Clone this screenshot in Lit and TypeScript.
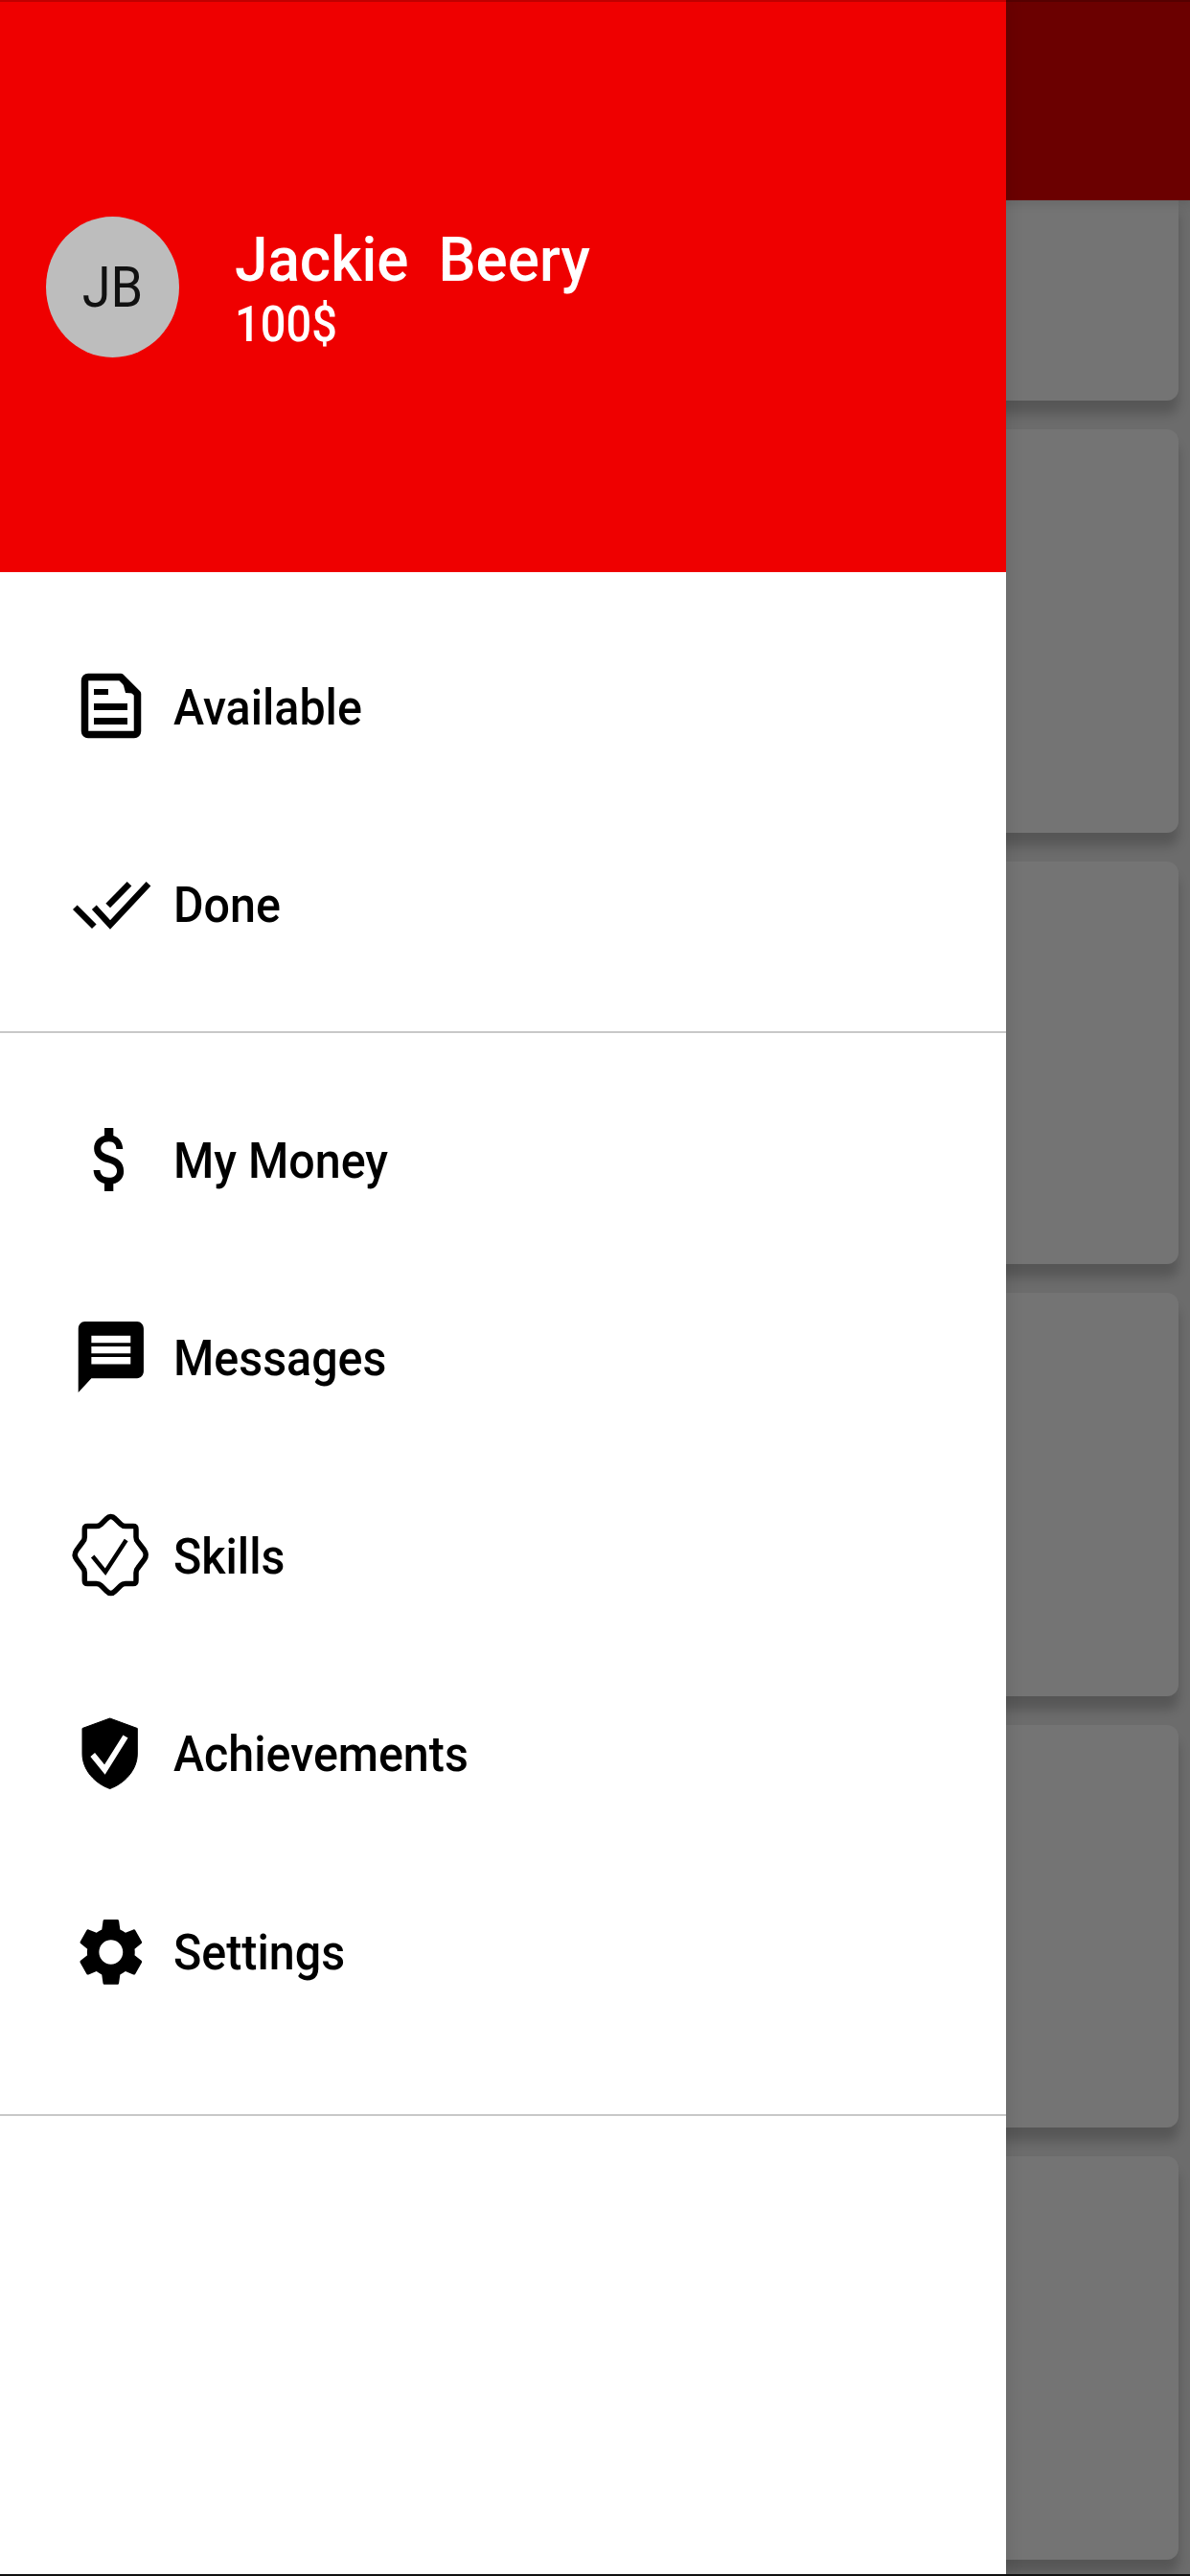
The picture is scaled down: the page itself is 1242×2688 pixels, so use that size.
import { LitElement, css, html, svg } from 'lit';
import { customElement } from 'lit/decorators.js';

// icons are drawn in a 90x100 box centred on the row
const icons = {
  available: svg`
    <path d="M22 19.5H56L73.5 37V76a3.5 3.5 0 0 1-3.5 3.5H22a3.5 3.5 0 0 1-3.5-3.5V23a3.5 3.5 0 0 1 3.5-3.5z" fill="none" stroke="#000" stroke-width="7.5" stroke-linejoin="round"/>
    <path d="M56 17L77 37L61 36z" fill="#000"/>
    <rect x="28" y="32" width="15" height="6"/><rect x="28" y="47" width="35" height="7"/><rect x="28" y="62" width="35" height="7"/>`,
  done: svg`
    <g fill="none" stroke="#000" stroke-width="6.5">
      <path d="M8.3 52.7L28.3 72.7"/>
      <path d="M28.3 52.7L45 71L85 28.3"/>
      <path d="M42.7 51L65 28.3"/>
    </g>`,
  money: svg`<g transform="translate(8 6) scale(3.1 3.67)"><path d="M11.8 10.9c-2.27-.59-3-1.2-3-2.15 0-1.09 1.01-1.85 2.7-1.85 1.78 0 2.44.85 2.5 2.1h2.21c-.07-1.72-1.12-3.3-3.21-3.81V3h-3v2.16c-1.94.42-3.5 1.68-3.5 3.61 0 2.31 1.91 3.46 4.7 4.13 2.5.6 3 1.48 3 2.41 0 .69-.49 1.79-2.7 1.79-2.06 0-2.87-.92-2.98-2.1h-2.2c.12 2.19 1.76 3.42 3.68 3.83V21h3v-2.15c1.95-.37 3.5-1.5 3.5-3.55 0-2.84-2.43-3.81-4.7-4.4z"/></g>`,
  messages: svg`<g transform="translate(4.9 4.6) scale(3.41 3.7)"><path d="M20 2H4c-1.1 0-1.99.9-1.99 2L2 22l4-4h14c1.1 0 2-.9 2-2V4c0-1.1-.9-2-2-2zm-2 12H6v-2h12v2zm0-3H6V9h12v2zm0-3H6V6h12v2z"/></g>`,
  skills: svg`
    <path d="M41 12Q45.7 7 50.4 12L56 17.5Q58 19.5 61 19.5H69Q72 19.5 72 22.5V31Q72 34 74 36L80.5 44.5Q84 49.4 80.5 54.3L74 63Q72 65 72 68V76.4Q72 79.4 69 79.4H61Q58 79.4 56 81.5L50.4 87Q45.7 92 41 87L35.5 81.5Q33.5 79.4 30.5 79.4H21.3Q18.3 79.4 18.3 76.4V68Q18.3 65 16.3 63L10 54.3Q6.5 49.4 10 44.5L16.3 36Q18.3 34 18.3 31V22.5Q18.3 19.5 21.3 19.5H30.5Q33.5 19.5 35.5 17.5z" fill="none" stroke="#000" stroke-width="5.5" stroke-linejoin="round"/>
    <path d="M26.7 51L40 67.3L61.7 33.9" fill="none" stroke="#000" stroke-width="4.5"/>`,
  achievements: svg`
    <path d="M44.7 13L73.3 23.5V50C73.3 67 60 81 44.7 86.5C29 81 16 67 16 50V23.5z" stroke="#000" stroke-width="1" stroke-linejoin="round"/>
    <path d="M26.7 51L39.3 66.5L61 32" fill="none" stroke="#fff" stroke-width="6"/>`,
  settings: svg`<g transform="translate(4.3 8.6) scale(3.46 3.53)"><path d="M19.14 12.94c.04-.3.06-.61.06-.94 0-.32-.02-.64-.07-.94l2.03-1.58c.18-.14.23-.41.12-.61l-1.92-3.32c-.12-.22-.37-.29-.59-.22l-2.39.96c-.5-.38-1.03-.7-1.62-.94l-.36-2.54c-.04-.24-.24-.41-.48-.41h-3.84c-.24 0-.43.17-.47.41l-.36 2.54c-.59.24-1.13.57-1.62.94l-2.39-.96c-.22-.08-.47 0-.59.22L2.74 8.87c-.12.21-.08.47.12.61l2.03 1.58c-.05.3-.09.63-.09.94s.02.64.07.94l-2.03 1.58c-.18.14-.23.41-.12.61l1.92 3.32c.12.22.37.29.59.22l2.39-.96c.5.38 1.03.7 1.62.94l.36 2.54c.05.24.24.41.48.41h3.84c.24 0 .44-.17.47-.41l.36-2.54c.59-.24 1.13-.56 1.62-.94l2.39.96c.22.08.47 0 .59-.22l1.92-3.32c.12-.22.07-.47-.12-.61l-2.01-1.58zM12 15.6c-1.98 0-3.6-1.62-3.6-3.6s1.62-3.6 3.6-3.6 3.6 1.62 3.6 3.6-1.62 3.6-3.6 3.6z"/></g>`,
};

const firstGroup = [
  { label: 'Available', icon: icons.available },
  { label: 'Done', icon: icons.done },
];

const secondGroup = [
  { label: 'My Money', icon: icons.money },
  { label: 'Messages', icon: icons.messages },
  { label: 'Skills', icon: icons.skills },
  { label: 'Achievements', icon: icons.achievements },
  { label: 'Settings', icon: icons.settings },
];

@customElement('app-root')
export class AppRoot extends LitElement {
  static styles = css`
    :host {
      display: block;
      position: relative;
      width: 1242px;
      height: 2688px;
      overflow: hidden;
      background: #6c6c6c;
      font-family: Roboto, "Liberation Sans", sans-serif;
    }
    /* thin dark lines along the screen edges */
    :host::before,
    :host::after {
      content: "";
      position: absolute;
      left: 0;
      right: 0;
      z-index: 2;
    }
    :host::before {
      top: 0;
      height: 2px;
      background: rgba(0, 0, 0, 0.2);
    }
    :host::after {
      bottom: 0;
      height: 2px;
      background: #111;
    }
    .appbar {
      position: relative;
      z-index: 1;
      height: 209px;
      background: #6b0000;
      box-shadow: 0 4px 10px rgba(0, 0, 0, 0.1);
    }
    .cards {
      display: flex;
      flex-direction: column;
      gap: 30px;
      padding: 0 12px 0 0;
    }
    .card {
      height: 420.5px;
      flex: none;
      background: #747474;
      border-radius: 0 12px 12px 0;
      box-shadow: 0 14px 12px rgba(0, 0, 0, 0.2);
    }
    .card:first-child {
      height: 209px;
      border-radius: 0 0 12px 0;
    }
    .drawer {
      position: absolute;
      z-index: 1;
      left: 0;
      top: 0;
      bottom: 0;
      width: 1050px;
      background: #fff;
      display: flex;
      flex-direction: column;
      box-shadow: 0 0 18px rgba(0, 0, 0, 0.12);
    }
    .header {
      height: 597px;
      flex: none;
      box-sizing: border-box;
      padding: 226px 0 0 48px;
      background: #ef0000;
      display: flex;
      align-items: flex-start;
      gap: 58px;
      color: #fff;
    }
    .avatar {
      width: 139px;
      height: 147px;
      border-radius: 50%;
      background: #bdbdbd;
      color: #111;
      display: flex;
      align-items: center;
      justify-content: center;
      font-size: 54px;
      flex: none;
    }
    .avatar span {
      transform: scaleY(1.1);
    }
    .who {
      display: flex;
      flex-direction: column;
      padding-top: 13px;
    }
    .name {
      font-size: 62px;
      line-height: 66px;
      font-weight: 500;
      white-space: pre;
      transform: scaleY(1.05);
      transform-origin: left 54px;
    }
    .money {
      margin-top: 3px;
      font-size: 47px;
      line-height: 56px;
      font-weight: 500;
      transform: scaleY(1.1);
      transform-origin: left top;
    }
    .group {
      padding: 37px 0 29px;
    }
    .group + .group {
      padding: 29px 0 66px;
      border-top: 2px solid #c8c8c8;
      border-bottom: 2px solid #c8c8c8;
    }
    .row {
      height: 206.5px;
      display: flex;
      align-items: center;
      padding-left: 70px;
      gap: 21px;
      color: #000;
    }
    .row svg {
      width: 90px;
      height: 100px;
      flex: none;
    }
    .label {
      font-size: 48.4px;
      font-weight: 500;
      transform: translateY(0.5px) scaleY(1.08);
    }
  `;

  renderRow(item: { label: string; icon: unknown }) {
    return html`
      <div class="row">
        <svg viewBox="0 0 90 100">${item.icon}</svg>
        <span class="label">${item.label}</span>
      </div>
    `;
  }

  render() {
    return html`
      <div class="appbar"></div>
      <div class="cards">
        ${[0, 1, 2, 3, 4, 5].map(() => html`<div class="card"></div>`)}
      </div>
      <div class="drawer">
        <div class="header">
          <div class="avatar"><span>JB</span></div>
          <div class="who">
            <div class="name">Jackie  Beery</div>
            <div class="money">100$</div>
          </div>
        </div>
        <div class="group">${firstGroup.map((item) => this.renderRow(item))}</div>
        <div class="group">${secondGroup.map((item) => this.renderRow(item))}</div>
      </div>
    `;
  }
}
